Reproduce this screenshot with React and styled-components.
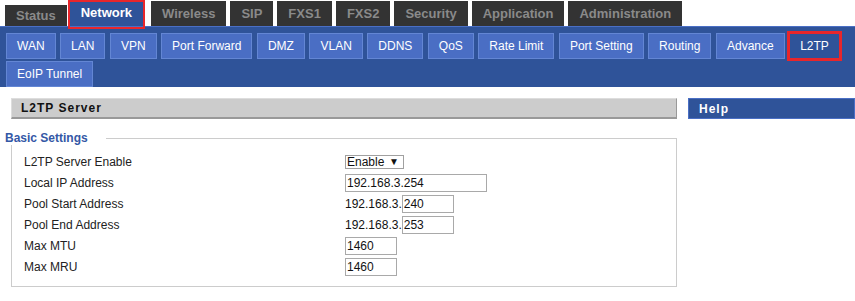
import styled, { createGlobalStyle } from "styled-components";

const GlobalStyle = createGlobalStyle`
  body {
    margin: 0;
    background: #fff;
    font-family: "Liberation Sans", Arial, sans-serif;
    font-size: 12px;
  }
`;

const TopTabs = styled.nav`
  display: flex;
  align-items: flex-end;
  height: 26px;
  padding-left: 5px;
`;

const TopTab = styled.div`
  position: relative;
  display: flex;
  align-items: center;
  height: ${(p) => (p.short ? "21px" : "25px")};
  padding: 0 11px;
  margin-right: ${(p) => (p.active ? "8px" : "4px")};
  margin-left: ${(p) => (p.active ? "-1px" : "0")};
  background: ${(p) => (p.active ? "#2f5399" : "#333333")};
  color: ${(p) => (p.active ? "#ffffff" : "#8a8a8a")};
  font-weight: bold;
  font-size: 13px;
  padding-bottom: ${(p) => (p.active ? "3px" : "0")};
  box-sizing: border-box;

  ${(p) =>
    p.active &&
    `
    &::after {
      content: "";
      position: absolute;
      left: -2px;
      right: -2px;
      top: -1px;
      bottom: -3px;
      border: 2px solid #e8262b;
      z-index: 2;
    }
  `}
`;

const SubBar = styled.div`
  display: flex;
  flex-wrap: wrap;
  column-gap: 4.5px;
  row-gap: 2px;
  background: #2f5399;
  border-top: 1px solid #4a6fc5;
  padding: 6px 0 0 6px;
  height: 54px;
`;

const SubTab = styled.div`
  display: flex;
  align-items: center;
  height: 26px;
  box-sizing: border-box;
  padding: 0 10px;
  color: #ffffff;
  font-size: 12px;
  background: ${(p) => (p.active ? "#2f5399" : "#4a6ec4")};
  border: 1px solid ${(p) => (p.active ? "#e8262b" : "#6386d4")};
  box-shadow: ${(p) => (p.active ? "0 0 0 2px #e8262b" : "none")};
`;

const Main = styled.div`
  display: grid;
  grid-template-columns: 666px 167px;
  column-gap: 11px;
  padding: 11px 0 0 11px;
`;

const LeftCol = styled.section``;

const SectionHead = styled.div`
  height: 21px;
  box-sizing: border-box;
  display: flex;
  align-items: center;
  padding-left: 9px;
  background: #cccccc;
  border: 1px solid;
  border-color: #dddddd #999999 #999999 #dddddd;
  border-bottom-width: 2px;
  font-weight: bold;
  font-size: 12px;
  letter-spacing: 1px;
  color: #111;
`;

const HelpHead = styled(SectionHead)`
  background: #2f5399;
  border: 1px solid #4a6fc5;
  color: #ffffff;
  padding-left: 10px;
`;

const Fieldset = styled.fieldset`
  margin: 12px 0 0 0;
  padding: 6px 0 9px 12px;
  border: 1px solid #cccccc;
  min-width: 0;
`;

const Legend = styled.legend`
  margin-left: -19px;
  padding: 0 18px 0 0;
  color: #3458a6;
  font-weight: bold;
  font-size: 12px;
`;

const FormGrid = styled.div`
  display: grid;
  grid-template-columns: 321px 1fr;
  grid-auto-rows: 21px;
  align-items: center;
`;

const Label = styled.div`
  color: #222;
`;

const Control = styled.div`
  display: flex;
  align-items: center;
  color: #111;
`;

const SelectBox = styled.div`
  display: flex;
  align-items: center;
  justify-content: space-between;
  width: 59px;
  height: 14px;
  box-sizing: border-box;
  border: 1px solid #a0a0a0;
  padding: 0 4px 0 1px;
  font-size: 12px;
  line-height: 12px;
`;

const Arrow = styled.span`
  font-size: 10px;
`;

const Input = styled.input`
  width: ${(p) => p.w}px;
  height: 18px;
  box-sizing: border-box;
  border: 1px solid #a9a9a9;
  padding: 0 1px;
  margin: 0;
  font-family: "Liberation Sans", Arial, sans-serif;
  font-size: 12px;
  color: #111;
  outline: none;
`;

const topTabs = [
  "Status",
  "Network",
  "Wireless",
  "SIP",
  "FXS1",
  "FXS2",
  "Security",
  "Application",
  "Administration",
];

const subTabs = [
  "WAN",
  "LAN",
  "VPN",
  "Port Forward",
  "DMZ",
  "VLAN",
  "DDNS",
  "QoS",
  "Rate Limit",
  "Port Setting",
  "Routing",
  "Advance",
  "L2TP",
  "EoIP Tunnel",
];

export default function App() {
  return (
    <>
      <GlobalStyle />
      <TopTabs>
        {topTabs.map((t) => (
          <TopTab key={t} active={t === "Network"} short={t === "Status"}>
            {t}
          </TopTab>
        ))}
      </TopTabs>
      <SubBar>
        {subTabs.map((t) => (
          <SubTab key={t} active={t === "L2TP"}>
            {t}
          </SubTab>
        ))}
      </SubBar>
      <Main>
        <LeftCol>
          <SectionHead>L2TP Server</SectionHead>
          <Fieldset>
            <Legend>Basic Settings</Legend>
            <FormGrid>
              <Label>L2TP Server Enable</Label>
              <Control>
                <SelectBox>
                  Enable <Arrow>▼</Arrow>
                </SelectBox>
              </Control>
              <Label>Local IP Address</Label>
              <Control>
                <Input w={142} defaultValue="192.168.3.254" readOnly />
              </Control>
              <Label>Pool Start Address</Label>
              <Control>
                <span>192.168.3.</span>
                <Input w={52} defaultValue="240" readOnly />
              </Control>
              <Label>Pool End Address</Label>
              <Control>
                <span>192.168.3.</span>
                <Input w={52} defaultValue="253" readOnly />
              </Control>
              <Label>Max MTU</Label>
              <Control>
                <Input w={52} defaultValue="1460" readOnly />
              </Control>
              <Label>Max MRU</Label>
              <Control>
                <Input w={52} defaultValue="1460" readOnly />
              </Control>
            </FormGrid>
          </Fieldset>
        </LeftCol>
        <div>
          <HelpHead>Help</HelpHead>
        </div>
      </Main>
    </>
  );
}
